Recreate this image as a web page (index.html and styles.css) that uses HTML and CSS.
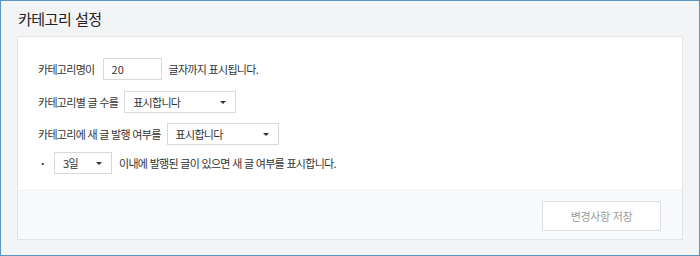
FILE: index.html
```html
<!DOCTYPE html>
<html lang="ko">
<head>
<meta charset="utf-8">
<link rel="stylesheet" href="styles.css">
</head>
<body>
<div class="frame">
  <h1 class="title">카테고리 설정</h1>
  <section class="panel">
    <div class="panel-body">
      <div class="row r1">
        <span class="label">카테고리명이</span>
        <span class="field input">20</span>
        <span class="text">글자까지 표시됩니다.</span>
      </div>
      <div class="row r2">
        <span class="label">카테고리별 글 수를</span>
        <span class="field select sel-wide"><span>표시합니다</span><i class="caret"></i></span>
      </div>
      <div class="row r3">
        <span class="label">카테고리에 새 글 발행 여부를</span>
        <span class="field select sel-wide"><span>표시합니다</span><i class="caret"></i></span>
      </div>
      <div class="row r4">
        <span class="bullet">·</span>
        <span class="field select sel-small"><span>3일</span><i class="caret"></i></span>
        <span class="text">이내에 발행된 글이 있으면 새 글 여부를 표시합니다.</span>
      </div>
    </div>
    <div class="panel-foot">
      <button class="save">변경사항 저장</button>
    </div>
  </section>
</div>
</body>
</html>
```
FILE: styles.css
```css
html, body { margin: 0; padding: 0; }
body {
  width: 700px;
  height: 256px;
  background: #f3f4f6;
  font-family: "Noto Sans CJK KR", "Noto Sans", sans-serif;
  color: #333;
}
.frame {
  box-sizing: border-box;
  width: 700px;
  height: 256px;
  border: 1px solid #5b95c4;
  padding: 0 16px 15px 16px;
  display: flex;
  flex-direction: column;
}
.title {
  margin: 0;
  height: 35px;
  line-height: 35px;
  font-size: 15px;
  font-weight: 400;
  letter-spacing: -0.5px;
  padding-left: 1px;
  color: #222;
}
.panel {
  flex: 1;
  border: 1px solid #e2e4e7;
  background: #f8f9fa;
  display: flex;
  flex-direction: column;
}
.panel-body {
  background: #fff;
  padding: 21px 20px 0 20px;
  height: 132px;
  font-size: 11px;
  letter-spacing: -0.7px;
}
.row {
  display: flex;
  align-items: center;
  height: 22px;
}
.r1 { margin-top: 0; }
.r2 { margin-top: 11px; }
.r3 { margin-top: 10px; }
.r4 { margin-top: 7px; }
.label { margin-right: 6px; }
.r1 .label { margin-right: 8px; }
.text { margin-left: 7px; }
.bullet { width: 16px; padding-left: 3px; box-sizing: border-box; font-weight: 700; }
.field {
  box-sizing: border-box;
  height: 22px;
  border: 1px solid #d6d8db;
  background: #fff;
  display: inline-flex;
  align-items: center;
  color: #333;
}
.input { width: 59px; padding-left: 8px; letter-spacing: 0; }
.select { justify-content: space-between; padding: 0 9px 0 8px; }
.sel-wide { width: 112px; }
.sel-small { width: 58px; }
.caret {
  width: 0; height: 0;
  border-left: 3px solid transparent;
  border-right: 3px solid transparent;
  border-top: 3px solid #333;
}
.panel-foot {
  flex: 1;
  border-top: 1px solid #eef0f2;
  display: flex;
  justify-content: flex-end;
  align-items: center;
  padding-right: 21px;
}
.save {
  width: 119px;
  height: 30px;
  border: 1px solid #dcdfe3;
  background: #fff;
  color: #9a9a9a;
  font-family: "Noto Sans CJK KR", sans-serif;
  font-size: 11px;
  letter-spacing: -0.3px;
  margin-top: 1px;
}
```
